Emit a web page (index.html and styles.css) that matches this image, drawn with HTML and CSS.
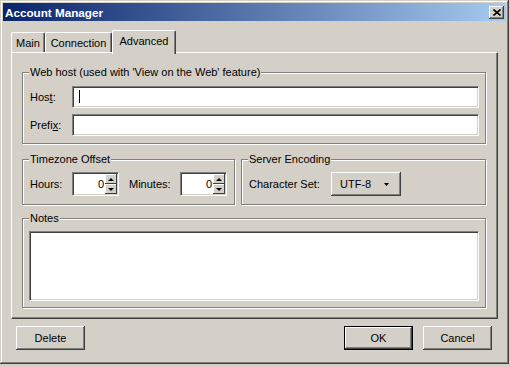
FILE: index.html
```html
<!doctype html>
<html lang="en">
<head>
	<meta charset="UTF-8">
	<title>Account Manager</title>
	<link rel="stylesheet" href="styles.css">
</head>
<body>
<div class="window">
	<div class="titlebar">
		<span class="title">Account Manager</span>
		<span class="close">
			<svg width="8" height="7" viewBox="0 0 8 7"><path d="M0.5 0.5L7.5 6.5M7.5 0.5L0.5 6.5" stroke="#000" stroke-width="1.6"/></svg>
		</span>
	</div>
	<div class="content">
		<div class="tabs">
			<div class="tab tab_main">Main</div>
			<div class="tab tab_conn">Connection</div>
			<div class="tab active">Advanced</div>
		</div>
		<div class="panel">
			<!-- web host -->
			<div class="group group_web">
				<span class="group_title">Web host (used with 'View on the Web' feature)</span>
				<div class="row">
					<label class="lbl_host">Hos<u>t</u>:</label>
					<div class="field"><span class="caret"></span></div>
				</div>
				<div class="row">
					<label class="lbl_host">Prefi<u>x</u>:</label>
					<div class="field"></div>
				</div>
			</div>
			<div class="pair">
				<div class="group group_tz">
					<span class="group_title">Timezone Offset</span>
					<label class="lbl_hours">Hours:</label>
					<div class="spin">
						<span class="spin_val">0</span>
						<span class="spin_btns"><span class="arrow up"></span><span class="arrow down"></span></span>
					</div>
					<label class="lbl_min">Minutes:</label>
					<div class="spin">
						<span class="spin_val">0</span>
						<span class="spin_btns"><span class="arrow up"></span><span class="arrow down"></span></span>
					</div>
				</div>
				<div class="group group_enc">
					<span class="group_title">Server Encoding</span>
					<label class="lbl_charset">Character Set:</label>
					<div class="dropdown">UTF-8 <svg class="drop_arrow" width="5" height="3" viewBox="0 0 5 3"><polygon points="0,0 5,0 2.5,3" fill="#000"/></svg></div>
				</div>
			</div>
			<div class="group group_notes">
				<span class="group_title">Notes</span>
				<div class="notes_field"></div>
			</div>
		</div>
		<div class="actions">
			<button class="btn">Delete</button>
			<button class="btn btn_ok">OK</button>
			<button class="btn btn_cancel">Cancel</button>
		</div>
	</div>
</div>
</body>
</html>
```

FILE: styles.css
```css
*{box-sizing: border-box;}
html,body{margin: 0;}
body{background: #d4d0c8;font: 11px "Liberation Sans", Arial, sans-serif;color: #000;}
.window{width: 509px;height: 364px;padding: 3px;background: #d4d0c8;box-shadow: inset -1px -1px #404040, inset 1px 1px #d4d0c8, inset -2px -2px #808080, inset 2px 2px #fff;}
/*title bar*/
.titlebar{height: 18px;display: flex;align-items: center;justify-content: space-between;padding: 0 2px;background: linear-gradient(to right, #0a246a, #a6caf0);}
.title{color: #fff;font-weight: bold;font-size: 11.7px;}
.close{width: 15px;height: 13px;display: flex;align-items: center;justify-content: center;background: #d4d0c8;box-shadow: inset -1px -1px #404040, inset 1px 1px #fff, inset -2px -2px #808080;}
.content{padding: 9px 8px 0;}
/*tabs*/
.tabs{display: flex;align-items: flex-end;height: 22px;position: relative;z-index: 1;}
.tab{height: 20px;padding-top: 3px;line-height: 14px;text-align: center;background: #d4d0c8;border-top: 1px solid #fff;border-left: 1px solid #fff;border-right: 1px solid #404040;box-shadow: inset -1px 0 #808080;border-radius: 2px 2px 0 0;}
.tab_main{width: 34px;}
.tab_conn{width: 67px;}
.tab.active{width: 64px;height: 24px;margin-bottom: -2px;}
.panel{height: 267px;padding: 19px 11px 10px 10px;border: 1px solid;border-color: #fff #404040 #404040 #fff;box-shadow: inset -1px -1px #808080;}
/*group boxes*/
.group{position: relative;border: 1px solid #808080;box-shadow: inset 1px 1px #fff, 1px 1px #fff;}
.group_title{position: absolute;top: -7px;left: 6px;padding: 0 1px;line-height: 13px;background: #d4d0c8;white-space: nowrap;}
.group_web{height: 72px;padding: 13px 6px 7px 7px;display: flex;flex-direction: column;gap: 6px;}
.row{display: flex;align-items: center;}
.lbl_host{width: 42px;}
.field{flex: 1;height: 22px;background: #fff;border: 1px solid;border-color: #808080 #fff #fff #808080;box-shadow: inset 1px 1px #404040, inset -1px -1px #d4d0c8;}
.caret{display: block;width: 1px;height: 13px;margin: 3px 0 0 6px;background: #000;}
.pair{display: flex;gap: 6px;margin-top: 15px;}
.group_tz{width: 213px;height: 46px;padding: 12px 7px 8px;display: flex;align-items: center;}
.group_enc{flex: 1;height: 46px;padding: 12px 7px 8px;display: flex;align-items: center;}
.lbl_hours{width: 42px;}
.lbl_min{width: 51px;margin-left: 10px;}
.lbl_charset{width: 82px;}
/*spinners*/
.spin{width: 47px;height: 24px;display: flex;padding: 1px;background: #fff;border: 1px solid;border-color: #808080 #fff #fff #808080;box-shadow: inset 1px 1px #404040, inset -1px -1px #d4d0c8;}
.spin_val{flex: 1;text-align: right;line-height: 20px;padding-right: 1px;}
.spin_btns{width: 12px;display: flex;flex-direction: column;}
.arrow{flex: 1;display: flex;align-items: center;justify-content: center;background: #d4d0c8;box-shadow: inset -1px -1px #404040, inset 1px 1px #fff;}
.arrow::after{content: "";border-left: 3px solid transparent;border-right: 3px solid transparent;}
.up::after{border-bottom: 3px solid #000;}
.down::after{border-top: 3px solid #000;}
/*buttons*/
.dropdown{width: 70px;height: 24px;display: flex;align-items: center;padding-left: 9px;background: #d4d0c8;box-shadow: inset -1px -1px #404040, inset 1px 1px #fff, inset -2px -2px #808080;}
.drop_arrow{margin-left: 13px;}
.group_notes{height: 90px;margin-top: 13px;padding: 12px 6px 6px;}
.notes_field{height: 70px;background: #fff;border: 1px solid;border-color: #808080 #fff #fff #808080;box-shadow: inset 1px 1px #404040, inset -1px -1px #d4d0c8;}
.actions{display: flex;margin: 7px 6px 0 5px;}
.btn{width: 69px;height: 24px;padding: 0;border: 0;font: inherit;color: #000;background: #d4d0c8;box-shadow: inset -1px -1px #404040, inset 1px 1px #fff, inset -2px -2px #808080;}
.btn_ok{margin-left: auto;box-shadow: inset 0 0 0 1px #000, inset -2px -2px #404040, inset 2px 2px #fff, inset -3px -3px #808080;}
.btn_cancel{margin-left: 10px;}
```
